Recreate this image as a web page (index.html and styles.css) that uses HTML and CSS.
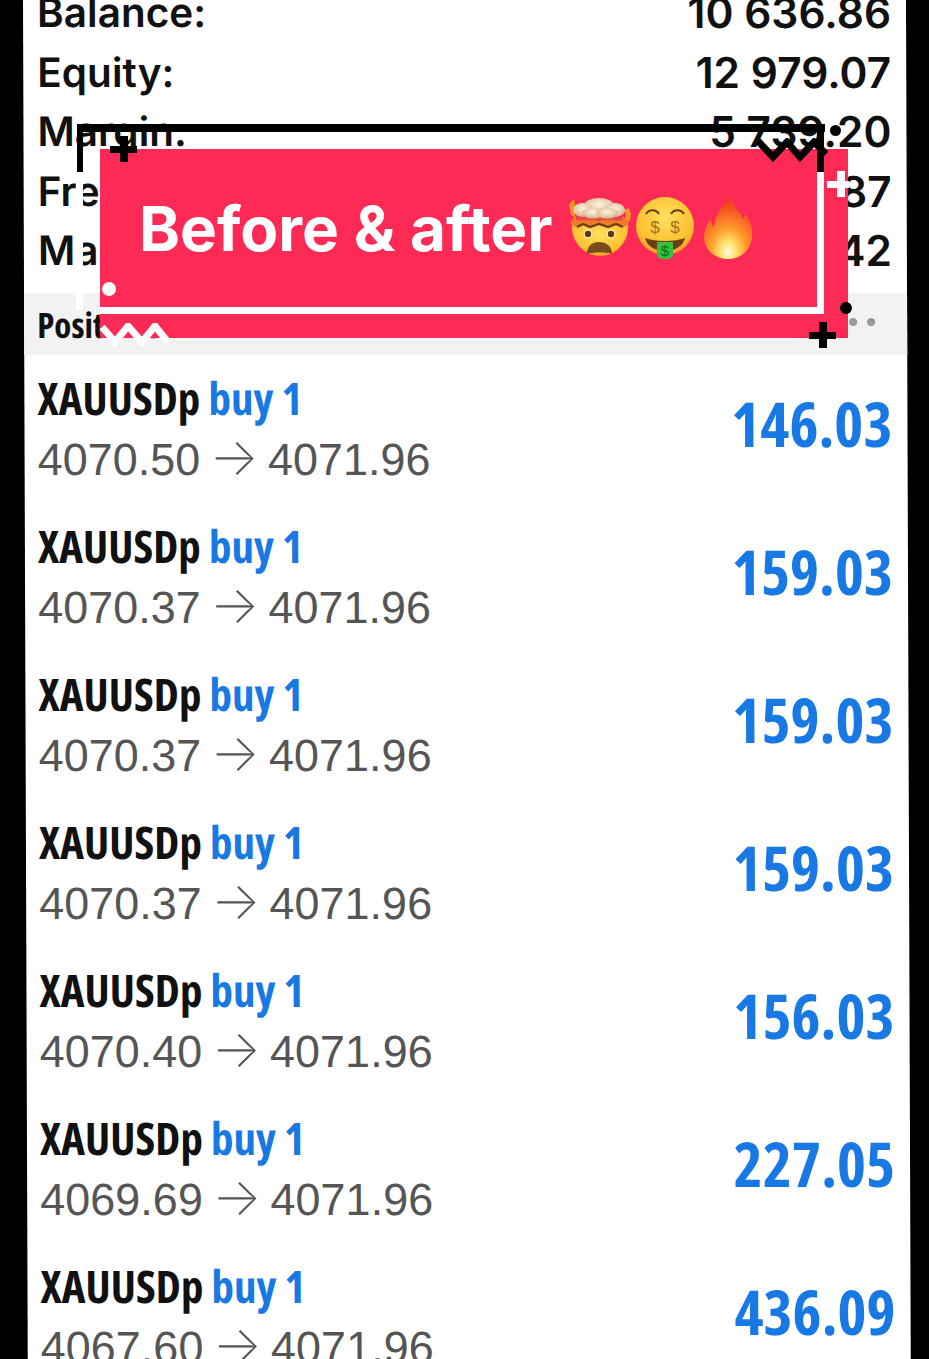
FILE: index.html
```html
<!DOCTYPE html>
<html lang="en">
<head>
  <meta charset="UTF-8">
  <title>Positions</title>
  <link rel="stylesheet" href="styles.css">
</head>
<body>
  <div class="sheet">
    <div class="summary">
      <div class="summary-row"><span>Balance:</span><span class="amount">10 636.86</span></div>
      <div class="summary-row"><span>Equity:</span><span class="amount">12 979.07</span></div>
      <div class="summary-row"><span>Margin:</span><span class="amount">5 739.20</span></div>
      <div class="summary-row"><span>Free margin:</span><span class="amount">7 239.87</span></div>
      <div class="summary-row"><span>Margin level (%):</span><span class="amount">226.42</span></div>
    </div>

    <div class="band">
      <span class="band-title">Positions</span>
      <span class="band-dots"><i></i><i></i><i></i></span>
    </div>

    <div class="trade">
      <div class="trade-info">
        <div class="trade-name">XAUUSDp <span class="blue">buy 1</span></div>
        <div class="trade-price">4070.50 <span class="arrow">→</span> 4071.96</div>
      </div>
      <div class="trade-profit">146.03</div>
    </div>
    <div class="trade">
      <div class="trade-info">
        <div class="trade-name">XAUUSDp <span class="blue">buy 1</span></div>
        <div class="trade-price">4070.37 <span class="arrow">→</span> 4071.96</div>
      </div>
      <div class="trade-profit">159.03</div>
    </div>
    <div class="trade">
      <div class="trade-info">
        <div class="trade-name">XAUUSDp <span class="blue">buy 1</span></div>
        <div class="trade-price">4070.37 <span class="arrow">→</span> 4071.96</div>
      </div>
      <div class="trade-profit">159.03</div>
    </div>
    <div class="trade">
      <div class="trade-info">
        <div class="trade-name">XAUUSDp <span class="blue">buy 1</span></div>
        <div class="trade-price">4070.37 <span class="arrow">→</span> 4071.96</div>
      </div>
      <div class="trade-profit">159.03</div>
    </div>
    <div class="trade">
      <div class="trade-info">
        <div class="trade-name">XAUUSDp <span class="blue">buy 1</span></div>
        <div class="trade-price">4070.40 <span class="arrow">→</span> 4071.96</div>
      </div>
      <div class="trade-profit">156.03</div>
    </div>
    <div class="trade">
      <div class="trade-info">
        <div class="trade-name">XAUUSDp <span class="blue">buy 1</span></div>
        <div class="trade-price">4069.69 <span class="arrow">→</span> 4071.96</div>
      </div>
      <div class="trade-profit">227.05</div>
    </div>
    <div class="trade">
      <div class="trade-info">
        <div class="trade-name">XAUUSDp <span class="blue">buy 1</span></div>
        <div class="trade-price">4067.60 <span class="arrow">→</span> 4071.96</div>
      </div>
      <div class="trade-profit">436.09</div>
    </div>
  </div>

  <!-- sticker over the screenshot -->
  <div class="sticker">
    <div class="sticker-title">
      <span>Before &amp; after</span>
      <svg class="emoji emoji-head" viewBox="0 0 63 64">
        <defs>
          <radialGradient id="skin" cx="50%" cy="35%" r="70%">
            <stop offset="0" stop-color="#ffdf5e"/>
            <stop offset="0.7" stop-color="#fbc02f"/>
            <stop offset="1" stop-color="#ec8f1e"/>
          </radialGradient>
          <radialGradient id="cloud" cx="50%" cy="40%" r="60%">
            <stop offset="0" stop-color="#fff6e4"/>
            <stop offset="1" stop-color="#d9b48a"/>
          </radialGradient>
          <radialGradient id="flame" cx="50%" cy="88%" r="85%">
            <stop offset="0" stop-color="#fffde6"/>
            <stop offset="0.2" stop-color="#ffe066"/>
            <stop offset="0.45" stop-color="#ff9a2c"/>
            <stop offset="0.85" stop-color="#f4501e"/>
            <stop offset="1" stop-color="#e8381c"/>
          </radialGradient>
        </defs>
        <path d="M4 27h56c2 18-12 33-28 33S2 45 4 27z" fill="url(#skin)"/>
        <path d="M1 8l5-5 1 6 4 4-5 3 2 6-5-3zM61 12l-5 2 2 6-3 6 7-1 1-7z" fill="#f39226"/>
        <path d="M2 27l5-7 5 5 8-3 11 3 11-3 8 3 5-5 6 7-5 4-8-3-6 3-11-3-11 3-6-3-7 3z" fill="#ef7a2a"/>
        <path d="M8 23h47" stroke="#e2503f" stroke-width="2.4"/>
        <path d="M9 31l6-3 7 3 9-3 9 3 8-3 7 3" fill="none" stroke="#6b3d12" stroke-width="2.2"/>
        <ellipse cx="31" cy="10" rx="15" ry="8" fill="url(#cloud)"/>
        <ellipse cx="15" cy="14" rx="10" ry="7" fill="url(#cloud)"/>
        <ellipse cx="47" cy="14" rx="10" ry="7" fill="url(#cloud)"/>
        <ellipse cx="25" cy="17" rx="11" ry="5.5" fill="url(#cloud)"/>
        <ellipse cx="39" cy="17" rx="11" ry="5.5" fill="url(#cloud)"/>
        <circle cx="20" cy="38" r="4.4" fill="#fff3c4"/>
        <circle cx="43" cy="38" r="4.4" fill="#fff3c4"/>
        <circle cx="20" cy="38" r="3.2" fill="#5b3a18"/>
        <circle cx="43" cy="38" r="3.2" fill="#5b3a18"/>
        <path d="M19 58c0-8 5-12 12-12s13 4 13 12c-4-2-21-2-25 0z" fill="#7a4a1e"/>
      </svg>
      <svg class="emoji emoji-money" viewBox="0 0 60 64">
        <circle cx="30" cy="30" r="29" fill="url(#skin)"/>
        <path d="M11 18c3-5 10-5 13 0M36 18c3-5 10-5 13 0" fill="none" stroke="#6b3d12" stroke-width="2.2"/>
        <text x="20" y="37" class="emoji-dollar">$</text>
        <text x="40" y="37" class="emoji-dollar">$</text>
        <path d="M10 42c10 4 30 4 40 0-2 8-10 13-20 13s-18-5-20-13z" fill="#6b3d12"/>
        <path d="M22 46h16v12c0 4-3 5-8 5s-8-1-8-5z" fill="#35c03a"/>
        <text x="30" y="60" class="emoji-dollar emoji-dollar-tongue">$</text>
      </svg>
      <svg class="emoji emoji-fire" viewBox="0 0 50 64">
        <path d="M27 1c3 10 11 15 13 22 2-2 2-4 2-6 5 7 8 15 7 24-1 13-11 22-24 22S1 54 1 41c0-7 3-13 7-18 0 4 1 6 3 8 1-12 8-21 16-30z" fill="url(#flame)"/>
      </svg>
    </div>
    <div class="frame-line frame-top"></div>
    <div class="frame-line frame-left-black"></div>
    <div class="frame-line frame-right-black"></div>
    <div class="frame-line frame-left-white"></div>
    <div class="frame-line frame-right-white"></div>
    <div class="frame-line frame-bottom-white"></div>

    <span class="plus plus-black plus-top"></span>
    <span class="plus plus-black plus-bottom"></span>
    <span class="plus plus-white"></span>
    <span class="dot dot-white"></span>
    <span class="dot dot-black"></span>
    <span class="dot dot-black-top"></span>

    <svg class="zigzag zigzag-black" viewBox="0 0 72 24"><polyline points="2,3 17,19 31,4 44,19 58,4 70,16"/></svg>
    <svg class="zigzag zigzag-white" viewBox="0 0 72 24"><polyline points="2,4 15,19 28,3 42,19 55,3 68,19"/></svg>
  </div>
</body>
</html>
```

FILE: styles.css
```css
body {
  margin: 0;
  height: 1359px;
  overflow: hidden;
  position: relative;
  background: #000;
  font-family: 'Inter', 'Liberation Sans', sans-serif;
}
.sheet {
  width: 883px;
  margin: -17px 0 0 23px;
  background: #fff;
  transform: skewX(0.2deg);
  transform-origin: 0 17px;
}
.summary {
  padding: 0 15px 12.5px 14px;
}
.summary-row {
  display: flex;
  justify-content: space-between;
  align-items: center;
  height: 59.5px;
  font-size: 40.5px;
  font-weight: 600;
  color: #111;
}
.amount {
  font-size: 42.5px;
}
.band {
  display: flex;
  justify-content: space-between;
  align-items: center;
  height: 62px;
  padding: 0 32px 0 13px;
  box-sizing: border-box;
  background: #f2f2f3;
}
.band-title {
  font-family: 'Open Sans', sans-serif;
  font-stretch: 75%;
  font-size: 35px;
  font-weight: 700;
  color: #111;
}
.band-dots {
  display: flex;
  gap: 10px;
  margin-bottom: 4px;
}
.band-dots i {
  width: 8px;
  height: 8px;
  border-radius: 50%;
  background: #999;
}
.trade {
  display: flex;
  justify-content: space-between;
  align-items: center;
  height: 148px;
  padding: 0 15px 0 13px;
  box-sizing: border-box;
}
.trade-name {
  font-family: 'Open Sans', sans-serif;
  font-stretch: 75%;
  font-size: 45px;
  font-weight: 700;
  line-height: 58px;
  margin-bottom: 3px;
  color: #111;
}
.blue {
  color: #1878e4;
}
.trade-price {
  font-family: 'Liberation Sans', sans-serif;
  font-size: 45px;
  line-height: 60px;
  color: #555;
}
.arrow {
  font-family: 'Inter', sans-serif;
  font-size: 52px;
  font-weight: 200;
  line-height: 0;
  margin: 0 -3.5px;
}
.trade-profit {
  font-family: 'Open Sans', sans-serif;
  font-stretch: 75%;
  font-size: 62px;
  font-weight: 700;
  padding-bottom: 12px;
  color: #1878e4;
}

/* sticker */
.sticker {
  position: absolute;
  left: 100px;
  top: 149px;
  width: 748px;
  height: 189px;
  background: #fd2a55;
}
.sticker-title {
  display: flex;
  align-items: center;
  height: 158px;
  padding-left: 39px;
  color: #fff;
  font-size: 62px;
  font-weight: 700;
}
.sticker-title span {
  margin-right: 15px;
}
.emoji {
  display: block;
}
.emoji-head { width: 63px; height: 64px; }
.emoji-money { width: 60px; height: 64px; margin-left: 4px; }
.emoji-fire { width: 50px; height: 64px; margin-left: 8px; }
.emoji-dollar {
  font-family: 'Liberation Sans', sans-serif;
  font-size: 17px;
  font-weight: 400;
  fill: #a86f1a;
  text-anchor: middle;
}
.emoji-dollar-tongue {
  font-size: 15px;
  fill: #0d6b1c;
}
.frame-line {
  position: absolute;
}
.frame-top {
  left: -23px;
  top: -25px;
  width: 748px;
  height: 8px;
  background: #000;
}
.frame-left-black {
  left: -23px;
  top: -17px;
  width: 6px;
  height: 40px;
  background: #000;
}
.frame-right-black {
  left: 717px;
  top: -17px;
  width: 7px;
  height: 40px;
  background: #000;
}
.frame-left-white {
  left: -24px;
  top: 23px;
  width: 7px;
  height: 138px;
  background: #fff;
}
.frame-right-white {
  left: 717px;
  top: 23px;
  width: 7px;
  height: 142px;
  background: #fff;
}
.frame-bottom-white {
  left: 0;
  top: 158px;
  width: 724px;
  height: 7px;
  background: #fff;
}
.plus {
  position: absolute;
  width: 27px;
  height: 26px;
}
.plus::before, .plus::after {
  content: "";
  position: absolute;
  background: currentColor;
}
.plus::before {
  left: 0;
  right: 0;
  top: 10px;
  height: 7px;
}
.plus::after {
  top: 0;
  bottom: 0;
  left: 10px;
  width: 8px;
}
.plus-black {
  color: #000;
}
.plus-top {
  left: 10px;
  top: -13px;
}
.plus-bottom {
  left: 709px;
  top: 173px;
}
.plus-white {
  color: #fff;
  left: 727px;
  top: 22px;
  width: 22px;
}
.dot {
  position: absolute;
  border-radius: 50%;
}
.dot-white {
  left: 2px;
  top: 133px;
  width: 14px;
  height: 14px;
  background: #fff;
}
.dot-black {
  left: 740px;
  top: 153px;
  width: 12px;
  height: 12px;
  background: #000;
}
.dot-black-top {
  left: 730px;
  top: -24px;
  width: 11px;
  height: 11px;
  background: #000;
}
.zigzag {
  position: absolute;
  width: 72px;
  height: 24px;
  fill: none;
  stroke-width: 7;
}
.zigzag-black {
  left: 656px;
  top: -11px;
  stroke: #000;
}
.zigzag-white {
  left: 0;
  top: 174px;
  stroke: #fff;
}
```
